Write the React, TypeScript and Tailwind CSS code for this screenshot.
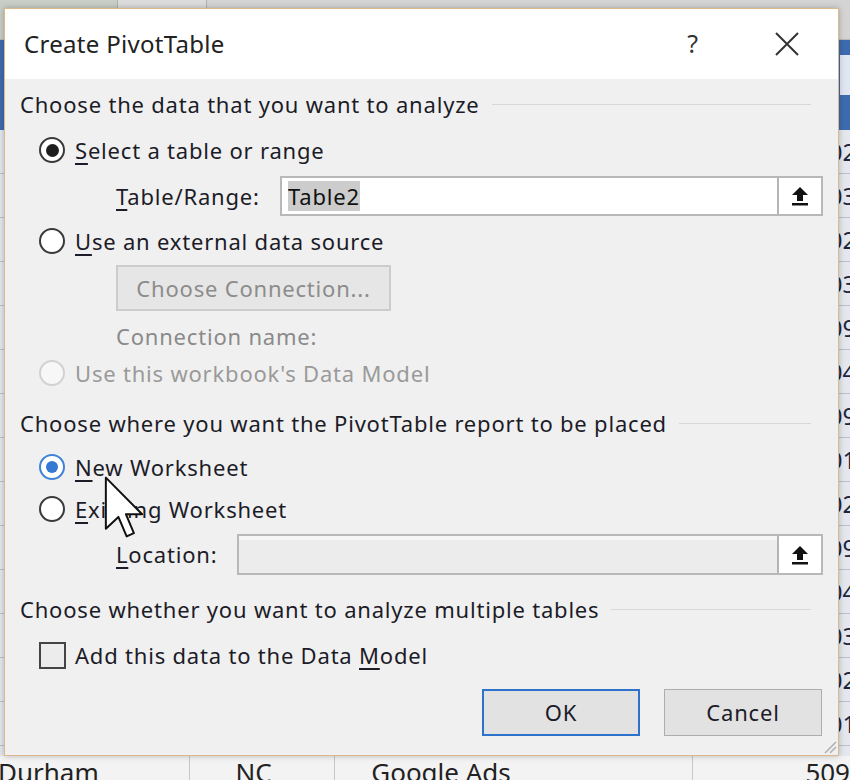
import React from "react";

const font = { fontFamily: '"Noto Sans", "Open Sans", sans-serif' };

const Radio = ({ state }: { state: "on" | "off" | "blue" | "disabled" }) => {
  if (state === "blue") {
    return (
      <div className="w-[26px] h-[26px] rounded-full border-2 border-[#3f83d8] bg-white flex items-center justify-center shrink-0">
        <div className="w-[12px] h-[12px] rounded-full bg-[#3478d4]" />
      </div>
    );
  }
  if (state === "disabled") {
    return <div className="w-[26px] h-[26px] rounded-full border-2 border-[#d2d2d2] bg-[#f7f7f7] shrink-0" />;
  }
  return (
    <div className="w-[26px] h-[26px] rounded-full border-2 border-[#3a3a3a] bg-white flex items-center justify-center shrink-0">
      {state === "on" && <div className="w-[13px] h-[13px] rounded-full bg-[#1e1e1e]" />}
    </div>
  );
};

const UpBtn = () => (
  <div className="w-[44px] self-stretch border-l-2 border-[#b4b4b4] bg-white flex items-center justify-center">
    <svg width="20" height="22" viewBox="0 0 20 22">
      <path d="M10 2 L18 10 L13 10 L13 16 L7 16 L7 10 L2 10 Z" fill="#111" />
      <rect x="2" y="18" width="16" height="2.5" fill="#111" />
    </svg>
  </div>
);

const SectionHead = ({ text }: { text: string }) => (
  <div className="flex items-center h-[28px]">
    <span className="whitespace-nowrap">{text}</span>
    <div className="flex-1 h-px bg-[#d8d8d8] ml-3 mr-[12px]" />
  </div>
);

const rows = ["5021", "5032", "5029", "5034", "5095", "5047", "5093", "5014", "5026", "5091", "5042", "5037", "5023", "5016"];

export default function App() {
  return (
    <div className="relative w-[850px] h-[780px] overflow-hidden bg-[#eef0f3]" style={font}>
      {/* spreadsheet behind */}
      <div className="flex flex-col w-full h-full">
        <div className="flex h-[40px] bg-[#d4d4d4] border-b border-[#b8b8b8]">
          <div className="w-[118px] bg-[#c9cec6] border-r border-[#b0b0b0]" />
          <div className="w-[89px] bg-[#dcdcdc] border-r border-[#b0b0b0]" />
          <div className="flex-1" />
        </div>
        <div className="h-[90px] bg-[#3d6bb0] flex justify-end">
          <div className="w-[10px] h-[40px] mt-[15px] bg-[#dfe6f2]" />
        </div>
        <div className="flex-1 flex flex-col bg-[#e4e8ee]">
          {rows.map((r) => (
            <div key={r} className="h-[44px] border-b border-[#b9c0cc] flex justify-end items-center">
              <span className="text-[24px] text-[#1b2540] w-[35px] leading-none">{r}</span>
            </div>
          ))}
        </div>
        <div className="h-[24px] bg-[#f3f3f3] flex text-[26px] text-[#222] leading-none overflow-hidden">
          <div className="w-[192px] border-r border-[#c8c8c8] pt-[3px] -ml-[2px]">Durham</div>
          <div className="w-[146px] border-r border-[#c8c8c8] pt-[3px] pl-[46px]">NC</div>
          <div className="w-[359px] border-r border-[#c8c8c8] pt-[3px] pl-[36px]">Google Ads</div>
          <div className="flex-1 pt-[3px] pl-[112px]">509</div>
        </div>
      </div>

      {/* dialog */}
      <div className="absolute left-[4px] top-[8px] w-[835px] h-[748px] border border-[#dcb98c] bg-[#f0f0f0] flex flex-col shadow-[0_0_6px_rgba(0,0,0,0.25)]">
        <div className="h-[70px] bg-white flex items-center pl-[19px] pr-[38px] shrink-0">
          <span className="text-[24px] text-[#222] flex-1 tracking-[0.3px]">Create PivotTable</span>
          <span className="text-[25px] text-[#333] mr-[76px]">?</span>
          <svg width="26" height="26" viewBox="0 0 26 26">
            <path d="M2 2 L24 24 M24 2 L2 24" stroke="#333" strokeWidth="2" />
          </svg>
        </div>

        <div className="flex flex-col pl-[15px] pr-[15px] text-[22px] tracking-[0.8px] text-[#1c1c28]">
          <div className="mt-[11px]">
            <SectionHead text="Choose the data that you want to analyze" />
          </div>

          <div className="flex items-center h-[28px] mt-[18px] pl-[19px]">
            <Radio state="on" />
            <span className="ml-[10px]"><u className="underline-offset-4">S</u>elect a table or range</span>
          </div>

          <div className="flex items-center mt-[12px] pl-[96px]">
            <span className="w-[164px]"><u className="underline-offset-4">T</u>able/Range:</span>
            <div className="flex-1 h-[40px] border-2 border-[#b8b8b8] bg-white flex items-center">
              <div className="flex-1 pl-[6px]">
                <span className="bg-[#cccccc] text-[#111]">Table2</span>
              </div>
              <UpBtn />
            </div>
          </div>

          <div className="flex items-center h-[28px] mt-[11px] pl-[19px]">
            <Radio state="off" />
            <span className="ml-[10px]"><u className="underline-offset-4">U</u>se an external data source</span>
          </div>

          <div className="mt-[10px] pl-[96px]">
            <div className="w-[275px] h-[46px] border-2 border-[#cccccc] bg-[#e6e6e6] text-[#8c8c8c] flex items-center justify-center">
              Choose Connection...
            </div>
          </div>

          <div className="h-[28px] mt-[11px] pl-[96px] flex items-center text-[#8a8a8a]">Connection name:</div>

          <div className="flex items-center h-[28px] mt-[9px] pl-[19px] text-[#9a9a9a]">
            <Radio state="disabled" />
            <span className="ml-[10px]">Use this workbook's Data Model</span>
          </div>

          <div className="mt-[22px]">
            <SectionHead text="Choose where you want the PivotTable report to be placed" />
          </div>

          <div className="flex items-center h-[28px] mt-[16px] pl-[19px]">
            <Radio state="blue" />
            <span className="ml-[10px]"><u className="underline-offset-4">N</u>ew Worksheet</span>
          </div>

          <div className="flex items-center h-[28px] mt-[14px] pl-[19px]">
            <Radio state="off" />
            <span className="ml-[10px]"><u className="underline-offset-4">E</u>xisting Worksheet</span>
          </div>

          <div className="flex items-center mt-[11px] pl-[96px]">
            <span className="w-[121px]"><u className="underline-offset-4">L</u>ocation:</span>
            <div className="flex-1 h-[41px] border-2 border-[#b8b8b8] bg-[#ececec] flex items-center">
              <div className="flex-1 self-stretch border-t-4 border-[#f6f6f6]" />
              <UpBtn />
            </div>
          </div>

          <div className="mt-[20px]">
            <SectionHead text="Choose whether you want to analyze multiple tables" />
          </div>

          <div className="flex items-center h-[28px] mt-[18px] pl-[19px]">
            <div className="w-[27px] h-[27px] border-2 border-[#444] bg-[#ececec] shrink-0" />
            <span className="ml-[9px]">Add this data to the Data <u className="underline-offset-4">M</u>odel</span>
          </div>

          <div className="flex justify-end gap-[24px] mt-[20px] pr-[1px]">
            <div className="w-[158px] h-[47px] border-2 border-[#2e72cc] bg-[#e2e2e2] flex items-center justify-center text-[#1c1c28]">OK</div>
            <div className="w-[158px] h-[47px] border border-[#adadad] bg-[#e2e2e2] flex items-center justify-center text-[#1c1c28]">Cancel</div>
          </div>
        </div>

        <svg className="absolute right-[1px] bottom-[1px]" width="16" height="16" viewBox="0 0 16 16">
          <path d="M15 4 L4 15 M15 9 L9 15" stroke="#b0b0b0" strokeWidth="1.5" />
        </svg>
      </div>

      {/* mouse pointer */}
      <svg className="absolute left-[104px] top-[476px]" width="40" height="66" viewBox="0 0 12 20">
        <path d="M0.5 0.5 L0.5 16 L4.3 12.4 L6.8 18.3 L9 17.3 L6.6 11.6 L11.5 11.6 Z" fill="#fff" stroke="#111" strokeWidth="0.6" strokeLinejoin="round" />
      </svg>
    </div>
  );
}
